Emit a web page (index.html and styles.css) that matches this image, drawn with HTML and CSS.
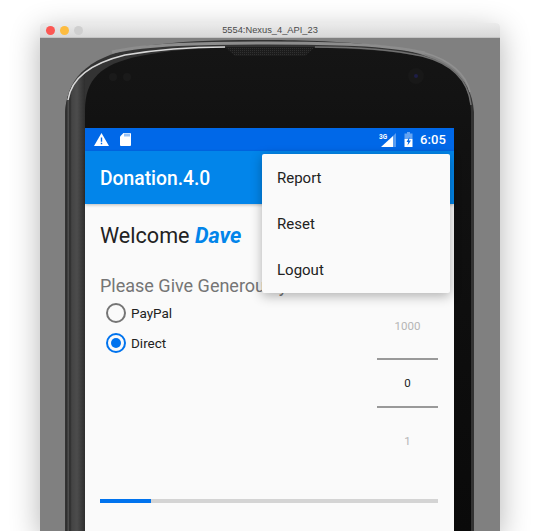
FILE: index.html
```html
<!DOCTYPE html>
<html lang="en">
<head>
<meta charset="utf-8">
<title>Donation</title>
<link rel="stylesheet" href="styles.css">
</head>
<body>
<div class="window">
  <div class="titlebar">
    <div class="lights">
      <span class="light red"></span>
      <span class="light yellow"></span>
      <span class="light grey"></span>
    </div>
    <span class="title">5554:Nexus_4_API_23</span>
  </div>
  <div class="desk">
    <svg class="bezel" viewBox="40 38 460 493" width="460" height="493" aria-hidden="true">
      <defs>
        <linearGradient id="side" gradientUnits="userSpaceOnUse" x1="65" y1="0" x2="85" y2="0">
          <stop offset="0" stop-color="#333"/>
          <stop offset=".1" stop-color="#2e2e2e"/>
          <stop offset=".16" stop-color="#555"/>
          <stop offset=".24" stop-color="#2a2a2a"/>
          <stop offset=".34" stop-color="#444"/>
          <stop offset=".6" stop-color="#4c4c4c"/>
          <stop offset="1" stop-color="#2e2e2e"/>
        </linearGradient>
        <linearGradient id="face" x1="0" y1="0" x2="0" y2="1">
          <stop offset="0" stop-color="#151515"/>
          <stop offset=".2" stop-color="#111"/>
          <stop offset="1" stop-color="#0a0a0a"/>
        </linearGradient>
        <filter id="soft" x="-5%" y="-5%" width="110%" height="110%"><feGaussianBlur stdDeviation=".6"/></filter>
        <pattern id="dots" width="2" height="2" patternUnits="userSpaceOnUse"><rect width="2" height="2" fill="#1c1c1c"/><rect width="1" height="1" fill="#303030"/></pattern>
      </defs>
      <path fill="#333" d="M474 531V112C471 74 445 58 392 47 345 41 300 40 268 40 220 40 180 41 145 46 92 55 68 74 65 112V531Z"/>
      <path fill="url(#side)" d="M65 531V112C67 90 74 78 85 70V531Z"/>
      <path fill="url(#face)" d="M85 531V110C85 80 100 64 140 56 170 50 200 48 225 48H315C350 48 385 50 420 56 452 63 470 80 471 112V531Z"/>
      <g fill="none" filter="url(#soft)">
        <path stroke="#8d8d8d" stroke-width="3" d="M112 52C150 44 200 43 268 43 330 43 385 44 425 53"/>
        <path stroke="#d8d8d8" stroke-width="1.500" d="M68 100C71 80 88 64 125 55 160 49 195 47 225 47"/>
        <path stroke="#6f6f6f" stroke-width="1.500" d="M315 47C350 47 390 49 422 56 450 63 468 78 471 105"/>
        <path stroke="#909090" stroke-width="1.500" d="M425 53C450 60 466 74 470 92"/>
      </g>
      <path fill="url(#dots)" d="M225 47 235 56H305L315 47Z"/>
      <circle cx="113" cy="77" r="4" fill="#1a1a1a"/>
      <circle cx="127" cy="77" r="4" fill="#1a1a1a"/>
      <circle cx="416" cy="76" r="8" fill="#181818"/>
      <circle cx="416" cy="76" r="2" fill="#1e1e46"/>
    </svg>
    <div class="screen">
      <div class="statusbar">
        <svg class="ic-warn" width="15" height="13" viewBox="0 0 15 13"><path fill="#fff" fill-rule="evenodd" d="M7.500 0 15 13H0zM6.800 4.500v4.300h1.400V4.500zM6.800 9.800v1.500h1.400V9.800z"/></svg>
        <svg class="ic-sd" width="11" height="13" viewBox="0 0 11 13"><path fill="#fff" d="M3.500 0H10a1 1 0 0 1 1 1v11a1 1 0 0 1-1 1H1a1 1 0 0 1-1-1V3.500z"/><path stroke="#0068e8" stroke-width=".8" d="M5 .5v3M7 .5v3M9 .5v3"/></svg>
        <span class="status-spacer"></span>
        <svg class="ic-signal" width="17" height="15" viewBox="0 0 17 15"><path fill="#fff" d="M14 15H2L14 4z"/><path fill="#fff" fill-opacity=".35" d="M14 4 17 1v14h-3z"/><text x="0" y="6.500" class="net">3G</text></svg>
        <svg class="ic-batt" width="9" height="15" viewBox="0 0 9 15"><path fill="#fff" fill-opacity=".4" d="M3 0h3v1.500h2.500V7H.5V1.500H3z"/><path fill="#fff" d="M.5 7h8v8h-8z"/><path fill="#0068e8" d="M5.500 5 2.500 10h1.700l-.7 3.500L7 8.500H5z"/></svg>
        <span class="clock">6:05</span>
      </div>
      <div class="appbar">Donation.4.0</div>
      <div class="content">
        <h1 class="welcome">Welcome <em>Dave</em></h1>
        <h2 class="prompt">Please Give Generously</h2>
        <div class="pay-area">
          <div class="radios">
            <div class="radio-row"><span class="radio"></span><span>PayPal</span></div>
            <div class="radio-row"><span class="radio on"></span><span>Direct</span></div>
          </div>
          <div class="picker">
            <span class="pick-faded">1000</span>
            <span class="pick-now">0</span>
            <span class="pick-faded">1</span>
          </div>
        </div>
        <div class="progress"><div class="progress-fill"></div></div>
      </div>
      <div class="menu">
        <div class="menu-item">Report</div>
        <div class="menu-item">Reset</div>
        <div class="menu-item">Logout</div>
      </div>
    </div>
  </div>
</div>
</body>
</html>
```
FILE: styles.css
```css
* { box-sizing: border-box; }
html, body { margin: 0; height: 531px; overflow: hidden; background: #fff; }
body { padding: 23px 42px 0 40px; font-family: Roboto, "Liberation Sans", sans-serif; }

.window {
  height: 508px;
  display: flex;
  flex-direction: column;
  border-radius: 4px 4px 0 0;
  box-shadow: 0 8px 30px rgba(0, 0, 0, .3);
  overflow: hidden;
}
.titlebar {
  position: relative;
  height: 15px;
  flex: none;
  display: flex;
  align-items: center;
  justify-content: center;
  background: linear-gradient(#ebebeb, #d8d8d8);
  border-bottom: 1px solid #c4c4c4;
}
.lights { position: absolute; left: 6px; top: 3px; display: flex; gap: 5px; }
.light { width: 9px; height: 9px; border-radius: 50%; }
.red { background: #fc5753; }
.yellow { background: #fdbc40; }
.grey { background: #cfcfcf; }
.title { font: 9.300px "Liberation Sans", sans-serif; color: #4a4a4a; }

.desk {
  position: relative;
  flex: 1;
  min-height: 0;
  background: #808080;
  padding: 90px 46px 0 45px;
  display: flex;
}
.bezel { position: absolute; left: 0; top: 0; display: block; }

.screen {
  position: relative;
  flex: 1;
  background: #fafafa;
  display: flex;
  flex-direction: column;
}
.statusbar {
  height: 23px;
  flex: none;
  background: #0068e8;
  display: flex;
  align-items: center;
  padding: 0 8px 0 9px;
  color: #fff;
}
.ic-sd { margin-left: 11px; }
.status-spacer { flex: 1; }
.ic-batt { margin-left: 8px; }
.net { font: 700 6.500px Roboto, sans-serif; fill: #fff; }
.clock { margin-left: 7px; font-size: 13px; font-weight: 500; letter-spacing: .1px; }

.appbar {
  height: 53px;
  flex: none;
  padding: 2px 0 0 15px;
  display: flex;
  align-items: center;
  background: #0285ea;
  color: #fff;
  font-size: 19.300px;
  font-weight: 500;
  box-shadow: 0 1px 3px rgba(0, 0, 0, .25);
}
.content { flex: 1; padding: 18px 16px 0 15px; display: flex; flex-direction: column; }
.welcome { margin: 0; font-size: 21.600px; line-height: 28px; font-weight: 400; color: #222; }
.welcome em { font-weight: 700; font-style: italic; color: #0285ea; }
.prompt { margin: 24px 0 0; font-size: 18px; line-height: 24px; font-weight: 400; color: #757575; }

.pay-area { display: flex; justify-content: space-between; height: 201px; }
.radios { padding: 4.500px 0 0 6px; display: flex; flex-direction: column; gap: 10px; }
.radio-row { display: flex; align-items: center; gap: 5px; height: 20px; font-size: 13.500px; color: #222; }
.radio {
  width: 20px;
  height: 20px;
  border: 2px solid #757575;
  border-radius: 50%;
}
.radio.on { border-color: #0073ee; padding: 3px; }
.radio.on::before { content: ""; display: block; width: 10px; height: 10px; border-radius: 50%; background: #0073ee; }

.picker {
  width: 61px;
  margin-top: 11px;
  display: flex;
  flex-direction: column;
  align-items: center;
  font-size: 11.500px;
}
.pick-faded { height: 34px; display: flex; align-items: center; color: #b5b5b5; }
.pick-now {
  width: 100%;
  height: 50px;
  margin-top: 15px;
  margin-bottom: 16px;
  display: flex;
  align-items: center;
  justify-content: center;
  color: #222;
  border-top: 2px solid #999;
  border-bottom: 2px solid #999;
}
.progress { height: 4px; background: #d4d4d4; }
.progress-fill { width: 15%; height: 100%; background: #0073ee; }

.menu {
  position: absolute;
  left: 177px;
  top: 26px;
  width: 188px;
  background: #fafafa;
  border-radius: 2px;
  box-shadow: 0 3px 12px rgba(0, 0, 0, .3);
  padding-top: 1px;
}
.menu-item {
  height: 46px;
  padding-left: 15px;
  display: flex;
  align-items: center;
  font-size: 15px;
  color: #222;
}
```
